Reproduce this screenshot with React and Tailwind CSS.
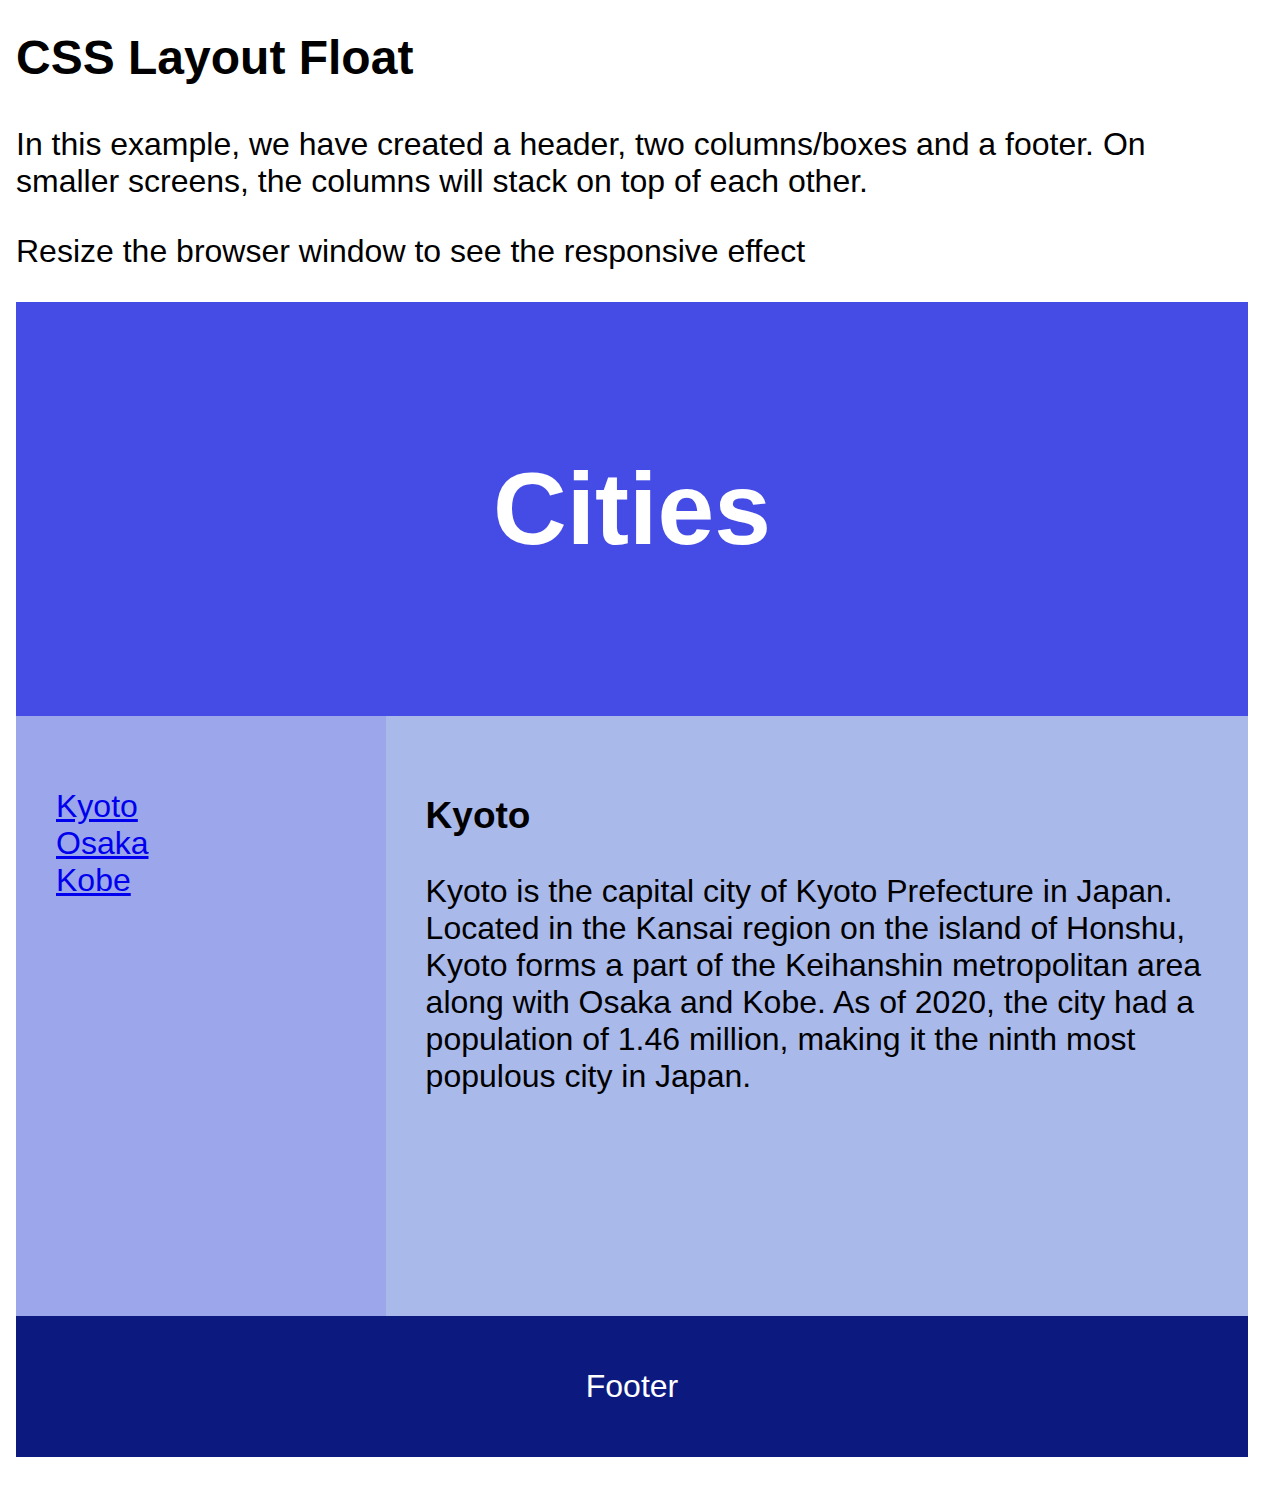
export default function App() {
  return (
    <div className="px-4 pt-[30px] pb-[33px] font-['Liberation_Sans',Arial,sans-serif] text-black bg-white">
      <h1 className="text-[48px] font-bold leading-[55px]">CSS Layout Float</h1>
      <p className="mt-[41px] text-[32px] leading-[37px]">
        In this example, we have created a header, two columns/boxes and a footer. On smaller screens, the columns will
        stack on top of each other.
      </p>
      <p className="mt-[33px] text-[32px] leading-[37px]">Resize the browser window to see the responsive effect</p>

      <header className="mt-[32px] h-[414px] flex items-center justify-center bg-[#444ce5]">
        <h2 className="text-[102px] font-bold leading-none text-white">Cities</h2>
      </header>

      <section className="flex h-[600px]">
        <nav className="w-[30%] bg-[#9ba7ea] pl-10 pt-[72px]">
          <ul className="text-[32px] leading-[37px]">
            <li>
              <a href="#" className="text-[#0000ee] underline">Kyoto</a>
            </li>
            <li>
              <a href="#" className="text-[#0000ee] underline">Osaka</a>
            </li>
            <li>
              <a href="#" className="text-[#0000ee] underline">Kobe</a>
            </li>
          </ul>
        </nav>
        <article className="w-[70%] bg-[#a9b9ea] px-10 pt-[79px]">
          <h2 className="text-[37px] font-bold leading-[42px]">Kyoto</h2>
          <p className="mt-[36px] text-[32px] leading-[37px]">
            Kyoto is the capital city of Kyoto Prefecture in Japan. Located in the Kansai region on the island of Honshu,
            Kyoto forms a part of the Keihanshin metropolitan area along with Osaka and Kobe. As of 2020, the city had a
            population of 1.46 million, making it the ninth most populous city in Japan.
          </p>
        </article>
      </section>

      <footer className="h-[141px] flex items-center justify-center bg-[#0c1a80] text-white text-[32px] leading-[37px]">
        <p>Footer</p>
      </footer>
    </div>
  )
}
